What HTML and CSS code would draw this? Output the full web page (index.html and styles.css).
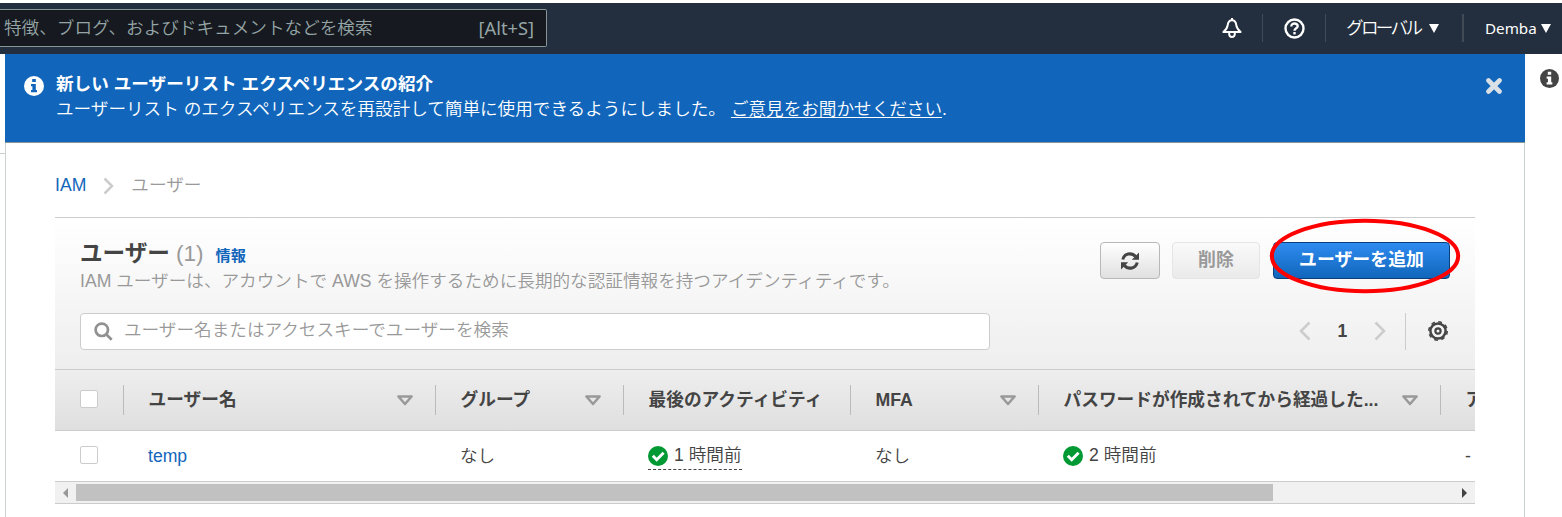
FILE: index.html
```html
<!DOCTYPE html>
<html lang="ja">
<head>
<meta charset="utf-8">
<title>IAM ユーザー</title>
<link rel="stylesheet" href="styles.css">
</head>
<body>
<svg class="defs" width="0" height="0">
  <symbol id="info" viewBox="0 0 20 20"><circle cx="10" cy="10" r="10" fill="currentColor"/><path class="cut" d="M8.2 3h3.6v3H8.2zM7 8h4.8v6H13v2.300H7V14h1.400v-3.700H7z"/></symbol>
  <symbol id="sort" viewBox="0 0 18 11"><path d="M2.400 1.500h13.200L9 9z" fill="none" stroke="#999" stroke-width="2.500" stroke-linejoin="round"/></symbol>
  <symbol id="check" viewBox="0 0 20 20"><circle cx="10" cy="10" r="10" fill="#093"/><path d="M4.800 9.800l3.900 3.900 6.900-6.900" fill="none" stroke="#fff" stroke-width="2.900"/></symbol>
</svg>
<header class="topbar">
  <div class="global-search"><span class="gs-text">特徴、ブログ、およびドキュメントなどを検索</span><span class="gs-key">[Alt+S]</span></div>
  <nav class="topnav">
    <span class="nav-bell"><svg width="20" height="21" viewBox="0 0 20 21" fill="none" stroke="#fff" stroke-width="2" stroke-linejoin="round"><path d="M10 2.200C7 2.200 6 4.600 5.700 7.200c-.4 3.300-1.500 4.500-4.300 6.800h17.200c-2.800-2.300-3.900-3.500-4.300-6.800C14 4.600 13 2.200 10 2.200z"/><path d="M10 0v2"/><path d="M7.200 14.500v1.500c0 4 5.600 4 5.600 0v-1.500"/></svg></span>
    <span class="nav-help"><svg width="21" height="21" viewBox="0 0 21 21" fill="none" stroke="#fff" stroke-width="2.400"><circle cx="10.500" cy="10.500" r="9"/><path d="M7.300 8.400c0-4 6.600-3.800 6.400-.1-.1 2-3.200 2.100-3.200 4.500"/><path d="M10.500 14v2.400"/></svg></span>
    <span class="nav-region"><span class="region-text">グローバル</span><i class="caret"></i></span>
    <span class="nav-user"><span class="user-text">Demba</span><i class="caret"></i></span>
  </nav>
</header>
<div class="shell">
  <aside class="left-rail"></aside>
  <main class="content">
    <section class="banner">
      <svg class="banner-info" width="20" height="20"><use href="#info"/></svg>
      <div class="banner-copy">
        <div class="banner-title">新しい ユーザーリスト エクスペリエンスの紹介</div>
        <div class="banner-text"><span class="banner-body">ユーザーリスト のエクスペリエンスを再設計して簡単に使用できるようにしました。</span><a class="feedback">ご意見をお聞かせください</a>.</div>
      </div>
      <svg class="banner-close" width="16" height="16" viewBox="0 0 16 16"><path d="M2.500 2.500l11 11M13.500 2.500l-11 11" stroke="#d9e0e6" stroke-width="4.600" stroke-linecap="round"/></svg>
    </section>
    <nav class="crumbs"><a class="link">IAM</a><svg width="11" height="18" viewBox="0 0 11 18"><path d="M1.500 1.500L9 9l-7.500 7.500" fill="none" stroke="#ccc" stroke-width="2.500"/></svg><span>ユーザー</span></nav>
    <section class="panel">
      <div class="panel-head">
        <div class="head-row">
          <div class="heading">
            <div class="title-line"><h1>ユーザー</h1><span class="count">(1)</span><a class="link info-link">情報</a></div>
            <p class="desc">IAM ユーザーは、アカウントで AWS を操作するために長期的な認証情報を持つアイデンティティです。</p>
          </div>
          <div class="actions">
            <button class="btn btn-refresh"><svg width="20" height="20" viewBox="0 0 20 20"><g fill="none" stroke="#444" stroke-width="3"><path d="M2.800 8.500C4 2.500 11.500 1 15.500 5.600"/><path d="M17.200 11.500C16 17.500 8.500 19 4.500 14.400"/></g><path d="M19 1.600v7.200h-7.200zM1 18.400v-7.200h7.200z" fill="#444"/></svg></button>
            <button class="btn btn-delete">削除</button>
            <button class="btn btn-primary">ユーザーを追加<svg class="highlight" width="192" height="76" viewBox="0 0 192 76"><ellipse cx="96" cy="38" rx="93.200" ry="35.300" fill="none" stroke="#f00" stroke-width="4"/></svg></button>
          </div>
        </div>
        <div class="filter-row">
          <div class="search"><svg width="19" height="19" viewBox="0 0 19 19" fill="none" stroke="#919191" stroke-width="2.700"><circle cx="7.800" cy="7.800" r="6.200"/><path d="M12.200 12.200l5.500 5.500"/></svg><span>ユーザー名またはアクセスキーでユーザーを検索</span></div>
          <div class="pager">
            <svg width="12" height="20" viewBox="0 0 12 20"><path d="M10.500 1.500L2 10l8.500 8.500" fill="none" stroke="#ccc" stroke-width="2.500"/></svg>
            <b>1</b>
            <svg width="12" height="20" viewBox="0 0 12 20"><path d="M1.500 1.500L10 10l-8.500 8.500" fill="none" stroke="#ccc" stroke-width="2.500"/></svg>
            <i class="pager-line"></i>
            <svg width="20" height="20" viewBox="0 0 20 20" fill="none" stroke="#444"><circle cx="10" cy="10" r="7.600" stroke-width="2.500"/><circle cx="10" cy="10" r="9.200" stroke-width="1.600" stroke-dasharray="3.700 3.525"/><circle cx="10" cy="10" r="2.600" stroke-width="2.200"/></svg>
          </div>
        </div>
      </div>
      <div class="row thead">
        <div class="cell"><i class="box"></i></div>
        <div class="cell"><span>ユーザー名</span><svg width="18" height="11"><use href="#sort"/></svg></div>
        <div class="cell"><span>グループ</span><svg width="18" height="11"><use href="#sort"/></svg></div>
        <div class="cell"><span>最後のアクティビティ</span></div>
        <div class="cell"><span>MFA</span><svg width="18" height="11"><use href="#sort"/></svg></div>
        <div class="cell"><span>パスワードが作成されてから経過した...</span><svg width="18" height="11"><use href="#sort"/></svg></div>
        <div class="cell"><span>ア</span></div>
      </div>
      <div class="row tbody">
        <div class="cell"><i class="box"></i></div>
        <div class="cell"><a class="link">temp</a></div>
        <div class="cell"><span>なし</span></div>
        <div class="cell"><span class="status dashed"><svg width="20" height="20"><use href="#check"/></svg>1 時間前</span></div>
        <div class="cell"><span>なし</span></div>
        <div class="cell"><span class="status"><svg width="20" height="20"><use href="#check"/></svg>2 時間前</span></div>
        <div class="cell"><span>-</span></div>
      </div>
      <div class="scrollbar"><i class="arrow-left"></i><i class="thumb"></i><i class="arrow-right"></i></div>
    </section>
  </main>
  <aside class="right-rail"><svg width="19" height="19"><use href="#info"/></svg></aside>
</div>
</body>
</html>
```
FILE: styles.css
```css
* { box-sizing: border-box; }
body {
  margin: 0;
  height: 517px;
  overflow: hidden;
  background: #fff;
  color: #444;
  font: 350 17.62px/25px "Liberation Sans", "Noto Sans CJK JP", sans-serif;
}
.defs { position: absolute; }
svg { display: block; flex: none; }
.link { color: #1166bb; }

.topbar {
  display: flex;
  justify-content: space-between;
  height: 54px;
  padding-top: 6px;
  background: #232f3e;
  border-top: 3px solid #e3e3e3;
  border-image: linear-gradient(#fff 66%, #ccc 66%) 3 0 0 0;
}
.global-search {
  display: flex;
  justify-content: space-between;
  align-items: center;
  width: 547px;
  height: 38px;
  padding: 0 12px 0 4px;
  background: #16191f;
  border: 1px solid #879596;
  border-left: 0;
  border-radius: 0 2px 2px 0;
  color: #95a5a6;
  white-space: nowrap;
}
.gs-key { padding-bottom: 2px; font: 400 18.3px "Noto Sans", sans-serif; }
.topnav { display: flex; align-items: center; height: 28px; margin-top: 5px; color: #fff; }
.topnav > span { display: flex; align-items: center; height: 28px; }
.nav-bell { padding-right: 20px; }
.nav-help { padding: 0 20px 0 21px; border-left: 1px solid #414b58; }
.nav-region { width: 137px; padding-left: 20px; border-left: 1px solid #414b58; }
.nav-user { width: 100px; padding-left: 21px; border-left: 2px solid #414b58; font-family: "Noto Sans", sans-serif; font-weight: 400; font-size: 15.2px; }
.region-text { width: 83px; white-space: nowrap; letter-spacing: -2.7px; }
.user-text { width: 56px; }
.caret { border: 5.500px solid transparent; border-top: 9px solid #fff; border-bottom: 0; }

.shell { display: flex; height: 463px; }
.left-rail { width: 5px; height: 100px; border-bottom: 1px solid #ccc; }
.content { width: 1520px; border: 1px solid #ccd1d3; border-width: 0 1px; }
.right-rail { padding: 15px 0 0 15px; color: #444; }
.cut { fill: var(--cut, #fff); }

.banner {
  --cut: #1166bb;
  display: flex;
  height: 89px;
  margin: 0 -1px;
  padding: 18px 23px 0 19px;
  background: #1166bb;
  border-bottom: 1px solid #879596;
  color: #fff;
}
.banner-info { margin: 4px 12px 0 0; }
.banner-copy { flex: 1; white-space: nowrap; }
.banner-title { font-weight: 700; }
.banner-text { letter-spacing: -0.02px; }
.feedback { margin-left: 5px; text-decoration: underline; text-underline-offset: 2px; }
.banner-close { margin-top: 6px; }

.crumbs { display: flex; align-items: center; height: 25px; margin: 29px 0 20px 49px; padding-top: 1px; color: #999; }
.crumbs svg { margin: 1px 17px 0 17px; }

.panel { width: 1420px; margin-left: 49px; overflow: hidden; border-top: 1px solid #ccc; }
.panel-head { height: 151px; padding: 22px 25px 0; background: linear-gradient(#fff, #eee); }
.head-row { display: flex; justify-content: space-between; height: 73px; }
.heading { white-space: nowrap; }
.title-line { display: flex; align-items: baseline; height: 28px; }
h1 { margin: 0; font-size: 22.600px; line-height: 28px; }
.count { margin: 0 12px 0 6px; color: #999; font-size: 22.500px; }
.info-link { font-size: 15.2px; font-weight: 700; }
.desc { margin: 0; padding-top: 1px; color: #999; }
.actions { display: flex; gap: 12px; margin-top: 2px; }
.btn {
  display: flex;
  align-items: center;
  justify-content: center;
  height: 37px;
  padding: 0 0 5px;
  border: 1px solid #b8b8b8;
  border-radius: 4px;
  background: linear-gradient(#fff, #e0e0e0);
  font: 700 17.900px "Noto Sans CJK JP", sans-serif;
}
.btn-refresh { width: 60px; padding: 0; color: #444; }
.btn-delete { width: 88px; border-color: #e5e5e5; background: linear-gradient(#fafafa, #eaeaea); color: #999; }
.btn-primary { position: relative; width: 177px; margin-left: 1px; border-color: #0a3f7c; background: linear-gradient(#2e8bf0, #1166bb); color: #fff; }
.highlight { position: absolute; left: -5px; top: -25px; }

.filter-row { display: flex; justify-content: space-between; align-items: center; height: 37px; }
.search {
  display: flex;
  align-items: center;
  gap: 11px;
  width: 910px;
  height: 37px;
  padding: 0 13px;
  border: 1px solid #ccc;
  border-radius: 4px;
  background: #fff;
  color: #999;
  white-space: nowrap;
}
.search span { padding-bottom: 2px; }
.pager { display: flex; align-items: center; height: 37px; margin-right: 2px; padding-bottom: 1px; }
.pager b { width: 63px; text-align: center; font-weight: 700; }
.pager-line { width: 1px; height: 37px; margin: 0 22px 0 19px; background: #ccc; }

.row { display: grid; grid-template-columns: 68px 312px 188px 227px 188px 402px 200px; align-items: center; }
.cell { display: flex; align-items: center; justify-content: space-between; padding: 0 21px 0 24px; border-left: 1px solid transparent; white-space: nowrap; }
.thead .cell { padding-left: 24.5px; }
.row .cell:first-child { padding: 0 0 2px 24px; }
.thead { height: 62px; border: 1px solid #ccc; border-width: 1px 0; background: linear-gradient(#eee, #dfdfdf); font-weight: 700; font-size: 17.7px; }
.thead .cell { height: 30px; border-left-color: #bbb; }
.thead .cell:first-child { border-left-color: transparent; }
.box { width: 18px; height: 18px; border: 1px solid #ccc; border-radius: 2px; background: #fff; }
.tbody { height: 50px; }
.status { display: flex; align-items: center; gap: 6px; height: 28px; border-bottom: 1px solid transparent; }
.dashed { border-bottom-color: #444; border-bottom-style: dashed; }

.scrollbar { display: flex; align-items: center; height: 23px; padding: 0 8px; border: 1px solid #ccc; border-width: 1px 0; background: #f1f1f1; }
.arrow-left, .arrow-right { border: 5px solid transparent; }
.arrow-left { border-right: 5px solid #999; border-left: 0; }
.arrow-right { margin-left: auto; border-left: 5px solid #444; border-right: 0; }
.thumb { width: 1197px; height: 17px; margin-left: 8px; background: #c1c1c1; }
```
